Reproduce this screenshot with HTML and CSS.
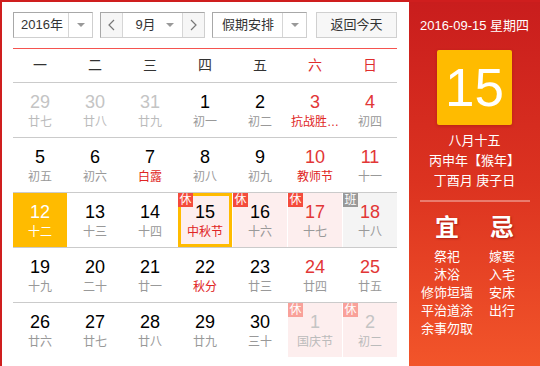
FILE: index.html
```html
<!DOCTYPE html>
<html lang="zh">
<head>
<meta charset="utf-8">
<title>万年历</title>
<link rel="stylesheet" href="styles.css">
</head>
<body>
<div class="cal">
  <div class="main">
    <div class="toolbar">
      <div class="sel sel-year"><span class="sel-text">2016年</span><span class="sel-arrow"><i class="tri"></i></span></div>
      <div class="month-group">
        <span class="nav"><svg width="7" height="12" viewBox="0 0 7 12"><polyline points="6,1 1,6 6,11" fill="none" stroke="#777" stroke-width="1.2"/></svg></span>
        <span class="month-sel"><span class="sel-text">9月</span><i class="tri"></i></span>
        <span class="nav"><svg width="7" height="12" viewBox="0 0 7 12"><polyline points="1,1 6,6 1,11" fill="none" stroke="#777" stroke-width="1.2"/></svg></span>
      </div>
      <div class="sel sel-holiday"><span class="sel-text">假期安排</span><span class="sel-arrow"><i class="tri"></i></span></div>
      <div class="btn-today">返回今天</div>
    </div>
    <div class="weekhead">
      <span>一</span><span>二</span><span>三</span><span>四</span><span>五</span><span class="we">六</span><span class="we">日</span>
    </div>
    <div class="week">
      <div class="day other"><b class="num">29</b><span class="lunar">廿七</span></div>
      <div class="day other"><b class="num">30</b><span class="lunar">廿八</span></div>
      <div class="day other"><b class="num">31</b><span class="lunar">廿九</span></div>
      <div class="day"><b class="num">1</b><span class="lunar">初一</span></div>
      <div class="day"><b class="num">2</b><span class="lunar">初二</span></div>
      <div class="day weekend"><b class="num">3</b><span class="lunar fest">抗战胜…</span></div>
      <div class="day weekend"><b class="num">4</b><span class="lunar">初四</span></div>
    </div>
    <div class="week">
      <div class="day"><b class="num">5</b><span class="lunar">初五</span></div>
      <div class="day"><b class="num">6</b><span class="lunar">初六</span></div>
      <div class="day"><b class="num">7</b><span class="lunar fest">白露</span></div>
      <div class="day"><b class="num">8</b><span class="lunar">初八</span></div>
      <div class="day"><b class="num">9</b><span class="lunar">初九</span></div>
      <div class="day weekend"><b class="num">10</b><span class="lunar fest">教师节</span></div>
      <div class="day weekend"><b class="num">11</b><span class="lunar">十一</span></div>
    </div>
    <div class="week">
      <div class="day selected"><b class="num">12</b><span class="lunar">十二</span></div>
      <div class="day"><b class="num">13</b><span class="lunar">十三</span></div>
      <div class="day"><b class="num">14</b><span class="lunar">十四</span></div>
      <div class="day rest today"><i class="badge">休</i><b class="num">15</b><span class="lunar fest">中秋节</span></div>
      <div class="day rest"><i class="badge">休</i><b class="num">16</b><span class="lunar">十六</span></div>
      <div class="day rest weekend"><i class="badge">休</i><b class="num">17</b><span class="lunar">十七</span></div>
      <div class="day work weekend"><i class="badge badge-work">班</i><b class="num">18</b><span class="lunar">十八</span></div>
    </div>
    <div class="week">
      <div class="day"><b class="num">19</b><span class="lunar">十九</span></div>
      <div class="day"><b class="num">20</b><span class="lunar">二十</span></div>
      <div class="day"><b class="num">21</b><span class="lunar">廿一</span></div>
      <div class="day"><b class="num">22</b><span class="lunar fest">秋分</span></div>
      <div class="day"><b class="num">23</b><span class="lunar">廿三</span></div>
      <div class="day weekend"><b class="num">24</b><span class="lunar">廿四</span></div>
      <div class="day weekend"><b class="num">25</b><span class="lunar">廿五</span></div>
    </div>
    <div class="week last">
      <div class="day"><b class="num">26</b><span class="lunar">廿六</span></div>
      <div class="day"><b class="num">27</b><span class="lunar">廿七</span></div>
      <div class="day"><b class="num">28</b><span class="lunar">廿八</span></div>
      <div class="day"><b class="num">29</b><span class="lunar">廿九</span></div>
      <div class="day"><b class="num">30</b><span class="lunar">三十</span></div>
      <div class="day rest other"><i class="badge">休</i><b class="num">1</b><span class="lunar">国庆节</span></div>
      <div class="day rest other"><i class="badge">休</i><b class="num">2</b><span class="lunar">初二</span></div>
    </div>
  </div>
  <aside class="side">
    <div class="side-date">2016-09-15 星期四</div>
    <div class="big-day">15</div>
    <div class="side-lunar">
      <div>八月十五</div>
      <div>丙申年【猴年】</div>
      <div>丁酉月 庚子日</div>
    </div>
    <div class="side-line"></div>
    <div class="yiji">
      <div class="yj-col">
        <div class="yj-title">宜</div>
        <div>祭祀</div><div>沐浴</div><div>修饰垣墙</div><div>平治道涂</div><div>余事勿取</div>
      </div>
      <div class="yj-col">
        <div class="yj-title">忌</div>
        <div>嫁娶</div><div>入宅</div><div>安床</div><div>出行</div>
      </div>
    </div>
  </aside>
</div>
</body>
</html>
```

FILE: styles.css
```css
* { box-sizing: border-box; }
html, body { margin: 0; padding: 0; background: #fff; }
body {
  font-family: "Liberation Sans", "Noto Sans CJK SC", sans-serif;
  color: #333;
}
.cal {
  display: flex;
  width: 540px;
  height: 366px;
  overflow: hidden;
  border-top: 2px solid #cf1e1e;
  border-left: 2px solid #cf1e1e;
}
.main {
  width: 407px;
  flex: none;
  padding: 10px 12px 0 11px;
}
.toolbar {
  display: flex;
  height: 26px;
  font-size: 13px;
  margin-bottom: 10px;
}
.sel {
  display: flex;
  height: 26px;
  border: 1px solid;
  border-color: #a8a8a8 #cfcfcf #cfcfcf #a8a8a8;
  background: #fff;
}
.sel-text {
  flex: 1;
  text-align: center;
  line-height: 24px;
}
.sel-arrow {
  width: 24px;
  border-left: 1px solid #d6d6d6;
  display: flex;
  align-items: center;
  justify-content: center;
}
.tri {
  display: block;
  width: 0;
  height: 0;
  border-left: 4px solid transparent;
  border-right: 4px solid transparent;
  border-top: 4px solid #999;
}
.sel-year { width: 80px; }
.sel-year .sel-text { padding-left: 2px; }
.month-group {
  display: flex;
  width: 105px;
  height: 26px;
  margin-left: 7px;
  border: 1px solid;
  border-color: #a8a8a8 #cfcfcf #cfcfcf #a8a8a8;
}
.nav {
  width: 21px;
  background: #f6f6f6;
  display: flex;
  align-items: center;
  justify-content: center;
}
.month-sel {
  flex: 1;
  display: flex;
  align-items: center;
  border-left: 1px solid #d6d6d6;
  border-right: 1px solid #d6d6d6;
  padding-right: 8px;
}
.month-sel .sel-text { padding-left: 2px; }
.sel-holiday { width: 95px; margin-left: 7px; }
.sel-holiday .sel-text { padding-left: 1px; }
.btn-today {
  width: 81px;
  margin-left: 9px;
  height: 26px;
  border: 1px solid #d0d0d0;
  background: #f7f7f7;
  text-align: center;
  line-height: 24px;
}
.weekhead {
  display: grid;
  grid-template-columns: repeat(7, 54px);
  column-gap: 1px;
  height: 35px;
  border-top: 1px solid #f5534f;
  border-bottom: 1px solid #cbcbcb;
  font-size: 14px;
  line-height: 32px;
  text-align: center;
  color: #333;
}
.weekhead .we { color: #e02d2d; }
.week {
  display: grid;
  grid-template-columns: repeat(7, 54px);
  column-gap: 1px;
  height: 55px;
  border-bottom: 1px solid #cbcbcb;
}
.week.last { border-bottom: 0; }
.day {
  position: relative;
  height: 54px;
  text-align: center;
  padding-top: 9px;
}
.num {
  display: block;
  font-weight: normal;
  font-size: 18px;
  line-height: 20px;
  color: #000;
}
.lunar {
  display: block;
  font-size: 12px;
  line-height: 20px;
  color: #999;
  white-space: nowrap;
}
.fest { color: #e02424; }
.weekend .num { color: #e23636; }
.other .num { color: #c4c4c4; }
.other .lunar { color: #bbb; }
.selected { background: #ffbb00; }
.selected .num, .selected .lunar { color: #fff; }
.rest { background: #fdeeee; }
.work { background: #f4f4f4; }
.today {
  border: 3px solid #ffbb00;
  padding-top: 6px;
}
.badge {
  position: absolute;
  top: 0;
  left: 0;
  width: 15px;
  height: 14px;
  background: #f44b3c;
  color: #fff;
  font-style: normal;
  font-size: 12px;
  line-height: 14px;
  text-align: center;
}
.today .badge { top: -3px; left: -3px; }
.badge-work { background: #999; }
.other .badge { background: #f9a19a; }
.side {
  width: 131px;
  flex: none;
  background: linear-gradient(180deg, #c91d1d 0%, #dc3320 50%, #f2552a 100%);
  color: #fff;
  text-align: center;
  font-size: 13px;
}
.side-date {
  margin-top: 15px;
  line-height: 18px;
}
.big-day {
  width: 75px;
  height: 75px;
  margin: 15px auto 0;
  background: #ffbb00;
  border-radius: 2px;
  box-shadow: 0 1px 3px rgba(120, 20, 0, 0.35);
  font-size: 53px;
  line-height: 75px;
}
.side-lunar {
  margin-top: 6px;
  line-height: 20px;
}
.side-line {
  width: 110px;
  height: 2px;
  margin: 9px auto 0;
  background: rgba(255, 255, 255, 0.35);
}
.yiji {
  display: flex;
  justify-content: center;
  margin-top: 11px;
  line-height: 18px;
}
.yj-col { width: 55px; }
.yj-title {
  font-size: 24px;
  font-weight: bold;
  line-height: 30px;
  margin-bottom: 5px;
  text-shadow: 1px 1px 2px rgba(120, 0, 0, 0.5);
}
```
